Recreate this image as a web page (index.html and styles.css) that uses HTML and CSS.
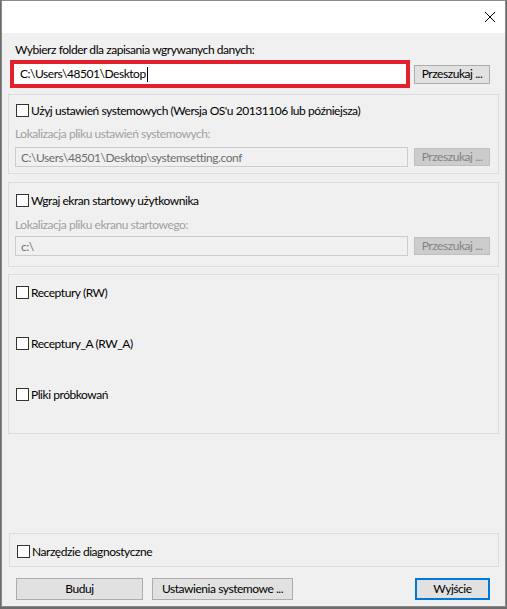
FILE: index.html
```html
<!DOCTYPE html>
<html lang="pl">
<head>
<meta charset="utf-8">
<title>Wgrywanie danych</title>
<link rel="stylesheet" href="styles.css">
</head>
<body>
<div class="window">
  <div class="titlebar">
    <svg class="close" width="12" height="12" viewBox="0 0 12 12"><path d="M1 1L11 11M11 1L1 11" stroke="#000" stroke-width="1" fill="none"/></svg>
  </div>
  <div class="content">
    <div class="label main-label">Wybierz folder dla zapisania wgrywanych danych:</div>
    <div class="path-row">
      <div class="path-box"><span class="path-text">C:\Users\48501\Desktop</span><span class="caret"></span></div>
      <div class="btn browse">Przeszukaj ...</div>
    </div>

    <div class="group g1">
      <div class="check-row"><span class="box"></span><span>Użyj ustawień systemowych (Wersja OS'u 20131106 lub późniejsza)</span></div>
      <div class="sub-label">Lokalizacja pliku ustawień systemowych:</div>
      <div class="input-row">
        <div class="input dis">C:\Users\48501\Desktop\systemsetting.conf</div>
        <div class="btn dis-btn">Przeszukaj ...</div>
      </div>
    </div>

    <div class="group g2">
      <div class="check-row"><span class="box"></span><span>Wgraj ekran startowy użytkownika</span></div>
      <div class="sub-label">Lokalizacja pliku ekranu startowego:</div>
      <div class="input-row">
        <div class="input dis">c:\</div>
        <div class="btn dis-btn">Przeszukaj ...</div>
      </div>
    </div>

    <div class="group g3">
      <div class="check-row"><span class="box"></span><span>Receptury (RW)</span></div>
      <div class="check-row"><span class="box"></span><span>Receptury_A (RW_A)</span></div>
      <div class="check-row"><span class="box"></span><span>Pliki próbkowań</span></div>
    </div>

    <div class="spacer"></div>

    <div class="group g4">
      <div class="check-row"><span class="box"></span><span>Narzędzie diagnostyczne</span></div>
    </div>

    <div class="footer">
      <div class="btn fbtn b-build">Buduj</div>
      <div class="btn fbtn b-sys">Ustawienia systemowe ...</div>
      <div class="btn fbtn b-exit">Wyjście</div>
    </div>
  </div>
</div>
</body>
</html>
```
FILE: styles.css
```css
html, body {
  margin: 0;
  padding: 0;
}
body {
  background: #6b6b6b;
  width: 507px;
  height: 609px;
  overflow: hidden;
  font-family: Lato, "Noto Sans", "Liberation Sans", sans-serif;
  font-size: 12px;
  letter-spacing: -0.45px;
  color: #000;
}
.window {
  width: 503px;
  height: 605px;
  margin-left: 1px;
  border: 1px solid #8a8a8a;
  background: #f0f0f0;
  display: flex;
  flex-direction: column;
}
.titlebar {
  height: 32px;
  background: #fff;
  display: flex;
  justify-content: flex-end;
  align-items: flex-start;
  flex: none;
}
.close {
  margin: 10px 9px 0 0;
}
.content {
  flex: 1;
  display: flex;
  flex-direction: column;
  padding: 0 6px 6px 6px;
}
.label {
  line-height: 16px;
  white-space: nowrap;
}
.main-label {
  margin-top: 9px;
  padding-left: 7px;
}
.path-row {
  display: flex;
  align-items: center;
  margin-top: 2px;
}
.path-box {
  margin-left: 2px;
  width: 386px;
  height: 20px;
  border: 4px solid #e3212d;
  background: #fff;
  display: flex;
  align-items: center;
  padding-left: 6px;
  box-sizing: content-box;
  line-height: 16px;
}
.caret {
  display: inline-block;
  width: 1px;
  height: 15px;
  margin-left: 1px;
  background: #000;
}
.btn {
  box-sizing: border-box;
  display: flex;
  align-items: center;
  justify-content: center;
  white-space: nowrap;
  background: #e1e1e1;
  border: 1px solid #adadad;
  line-height: 14px;
}
.browse {
  margin-left: 4px;
  width: 76px;
  height: 19px;
}
.group {
  box-sizing: border-box;
  border: 1px solid #dcdcdc;
  padding: 0 6px;
  flex: none;
}
.check-row {
  display: flex;
  align-items: center;
  height: 16px;
  white-space: nowrap;
}
.box {
  box-sizing: border-box;
  width: 13px;
  height: 13px;
  border: 1px solid #333;
  background: #fff;
  margin-left: 1px;
  margin-right: 2px;
  flex: none;
}
.sub-label {
  color: #a0a0a0;
  line-height: 16px;
  white-space: nowrap;
}
.input-row {
  display: flex;
  align-items: center;
}
.input {
  box-sizing: border-box;
  width: 393px;
  height: 20px;
  border: 1px solid #cccccc;
  padding-left: 5px;
  display: flex;
  align-items: center;
  white-space: nowrap;
}
.dis {
  background: #f0f0f0;
  color: #6d6d6d;
}
.dis-btn {
  margin-left: 6px;
  width: 76px;
  height: 18px;
  background: #cccccc;
  border-color: #bfbfbf;
  color: #838383;
}
.g1 {
  margin-top: 6px;
  height: 80px;
}
.g1 .check-row { margin-top: 7px; }
.g1 .sub-label { margin-top: 8px; }
.g1 .input-row { margin-top: 5px; }

.g2 {
  margin-top: 8px;
  height: 85px;
}
.g2 .check-row { margin-top: 9px; }
.g2 .sub-label { margin-top: 9px; }
.g2 .input-row { margin-top: 3px; }

.g3 {
  margin-top: 7px;
  height: 160px;
  padding-top: 9px;
}
.g3 .check-row + .check-row { margin-top: 35px; }

.spacer {
  flex: 1;
}
.g4 {
  height: 34px;
  padding-top: 9px;
  margin-left: 1px;
}
.footer {
  display: flex;
  margin-top: 11px;
  padding: 0 9px 0 8px;
  flex: none;
}
.fbtn {
  height: 22px;
}
.b-build {
  width: 127px;
}
.b-sys {
  width: 141px;
  margin-left: 9px;
}
.b-exit {
  width: 75px;
  margin-left: auto;
  border: 2px solid #0078d7;
}
```
